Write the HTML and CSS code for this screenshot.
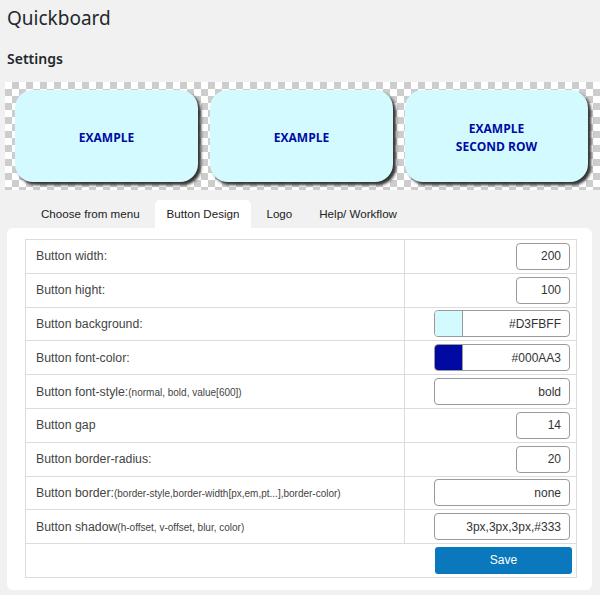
FILE: index.html
```html
<!DOCTYPE html>
<html>
<head>
<meta charset="utf-8">
<link rel="stylesheet" href="styles.css">
</head>
<body>
<div class="page">
  <h1 class="title">Quickboard</h1>
  <h2 class="subtitle">Settings</h2>
  <div class="preview">
    <div class="qbtn">EXAMPLE</div>
    <div class="qbtn">EXAMPLE</div>
    <div class="qbtn">EXAMPLE<br>SECOND ROW</div>
  </div>
  <div class="tabs">
    <div class="tab">Choose from menu</div>
    <div class="tab active">Button Design</div>
    <div class="tab">Logo</div>
    <div class="tab">Help/ Workflow</div>
  </div>
  <div class="panel">
    <table class="settings">
      <tr><td class="lbl">Button width:</td><td class="val"><span class="inp small">200</span></td></tr>
      <tr><td class="lbl">Button hight:</td><td class="val"><span class="inp small">100</span></td></tr>
      <tr><td class="lbl">Button background:</td><td class="val"><span class="inp wide color"><span class="swatch sw-bg"></span><span class="ctext">#D3FBFF</span></span></td></tr>
      <tr><td class="lbl">Button font-color:</td><td class="val"><span class="inp wide color"><span class="swatch sw-fg"></span><span class="ctext">#000AA3</span></span></td></tr>
      <tr><td class="lbl">Button font-style:<span class="hint">(normal, bold, value[600])</span></td><td class="val"><span class="inp wide">bold</span></td></tr>
      <tr><td class="lbl">Button gap</td><td class="val"><span class="inp small">14</span></td></tr>
      <tr><td class="lbl">Button border-radius:</td><td class="val"><span class="inp small">20</span></td></tr>
      <tr><td class="lbl">Button border:<span class="hint">(border-style,border-width[px,em,pt...],border-color)</span></td><td class="val"><span class="inp wide">none</span></td></tr>
      <tr><td class="lbl">Button shadow<span class="hint">(h-offset, v-offset, blur, color)</span></td><td class="val"><span class="inp wide">3px,3px,3px,#333</span></td></tr>
      <tr><td class="last" colspan="2"><span class="save">Save</span></td></tr>
    </table>
  </div>
</div>
</body>
</html>
```
FILE: styles.css
```css
html, body {
  margin: 0;
  padding: 0;
  background: #f1f1f1;
}
.page {
  width: 600px;
  height: 595px;
  box-sizing: border-box;
  padding: 0 8px 0 7px;
  overflow: hidden;
}
.title {
  margin: 0;
  padding-top: 4px;
  font-family: "Noto Sans", "Open Sans", sans-serif;
  font-weight: 400;
  font-size: 19px;
  line-height: 28px;
  color: #23282d;
}
.subtitle {
  margin: 17px 0 0;
  font-family: "Noto Sans", "Open Sans", sans-serif;
  font-weight: 600;
  font-size: 14px;
  line-height: 20px;
  color: #23282d;
}
.preview {
  margin: 13px -8px 0 -2px;
  height: 108px;
  box-sizing: border-box;
  padding: 8px 0 0 10px;
  display: flex;
  gap: 12px;
  background-color: #ffffff;
  background-image: conic-gradient(#cdcdcd 25%, transparent 0 50%, #cdcdcd 0 75%, transparent 0);
  background-size: 14px 14px;
}
.qbtn {
  width: 183px;
  height: 92px;
  flex: none;
  border-radius: 18px;
  background: #D3FBFF;
  box-shadow: 3px 3px 3px #333;
  display: flex;
  align-items: center;
  justify-content: center;
  text-align: center;
  padding-top: 3px;
  box-sizing: border-box;
  font-family: "Open Sans", "Noto Sans", sans-serif;
  font-weight: 700;
  font-size: 12px;
  line-height: 18px;
  color: #000AA3;
}
.tabs {
  margin-top: 10px;
  height: 28px;
  display: flex;
  padding-left: 22px;
}
.tab {
  padding: 0 12px;
  margin-right: 3px;
  font-family: "Liberation Sans", Arial, sans-serif;
  font-size: 11.6px;
  line-height: 28px;
  color: #222;
  border-radius: 5px 5px 0 0;
}
.tab.active {
  background: #ffffff;
}
.panel {
  background: #ffffff;
  border-radius: 6px;
  height: 362px;
  box-sizing: border-box;
  padding: 11px 15px 0 18px;
}
.settings {
  width: 552px;
  border-collapse: collapse;
  font-family: "Liberation Sans", Arial, sans-serif;
  font-size: 12.3px;
  color: #444;
}
.settings td {
  border: 1px solid #dcdcdc;
  height: 33.8px;
  padding: 0;
  box-sizing: border-box;
}
.lbl {
  width: 379px;
  padding-left: 10px !important;
}
.hint {
  font-size: 10px;
}
.val {
  text-align: right;
  padding-right: 6px !important;
}
.inp {
  display: inline-flex;
  align-items: center;
  justify-content: flex-end;
  vertical-align: middle;
  height: 27px;
  box-sizing: border-box;
  border: 1px solid #9a9a9a;
  border-radius: 4px;
  padding-right: 8px;
  font-size: 12px;
  color: #333;
  background: #fff;
}
.inp.small {
  width: 54px;
}
.inp.wide {
  width: 136px;
}
.inp.color {
  padding: 0;
  overflow: hidden;
  justify-content: space-between;
}
.swatch {
  width: 28px;
  height: 100%;
  border-right: 1px solid #9a9a9a;
  box-sizing: border-box;
}
.sw-bg { background: #D3FBFF; }
.sw-fg { background: #000AA3; }
.ctext {
  padding-right: 8px;
}
.last {
  text-align: right;
  padding-right: 4px !important;
}
.save {
  display: inline-block;
  vertical-align: middle;
  width: 137px;
  height: 27px;
  line-height: 27px;
  text-align: center;
  background: #0a78bc;
  color: #fff;
  border-radius: 3px;
  font-size: 12px;
}
```
